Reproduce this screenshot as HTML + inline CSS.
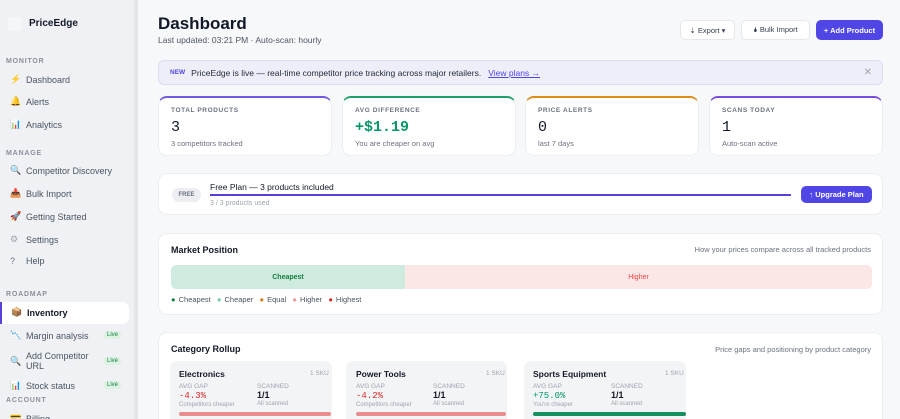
<!DOCTYPE html><html style="width:900px;height:419px;overflow:hidden"><head><style>
*{box-sizing:border-box;margin:0;padding:0}
body{width:900px;height:419px;overflow:hidden;font-family:"Liberation Sans",sans-serif;background:#f7f8fa;position:relative;color:#111827}
.sb{position:absolute;left:0;top:0;width:138px;height:419px;background:#eff1f4;border-right:4px solid #e4e6ea}
.a{position:absolute}
.lab{font-size:7px;font-weight:bold;color:#8a909b;letter-spacing:.8px;left:6px}
.it{left:10px;font-size:9px;color:#4b5563;display:flex;align-items:center}
.it i{font-style:normal;width:16px;font-size:9px;display:inline-block}
.live{position:absolute;left:104px;font-size:6px;color:#15803d;background:#dcf2e3;padding:1px 3px;border-radius:3px}
.card{position:absolute;background:#fff;border-radius:9px;border:1px solid #eceef1}
.sl{font-size:6.5px;color:#6b7280;letter-spacing:.6px;font-weight:bold}
.mono{font-family:"Liberation Mono",monospace}
.btn{position:absolute;top:20px;height:20px;border-radius:5px;font-size:7.5px;display:flex;align-items:center;justify-content:center;white-space:nowrap}
</style></head><body>
<div class="sb">
<div class="a" style="left:8px;top:17px;width:14px;height:14px;border-radius:4px;background:#f5f6f8"></div>
<div class="a" style="left:29px;top:18px;font-size:10px;font-weight:bold;color:#111827">PriceEdge</div>
<div class="a lab" style="top:58px">MONITOR</div>
<div class="a it" style="top:74px"><i style="color:#f59e0b">⚡</i>Dashboard</div>
<div class="a it" style="top:96px"><i style="color:#f5b000">🔔</i>Alerts</div>
<div class="a it" style="top:119px"><i>📊</i>Analytics</div>
<div class="a lab" style="top:150px">MANAGE</div>
<div class="a it" style="top:165px"><i>🔍</i>Competitor Discovery</div>
<div class="a it" style="top:188px"><i>📥</i>Bulk Import</div>
<div class="a it" style="top:211px"><i>🚀</i>Getting Started</div>
<div class="a it" style="top:234px"><i style="color:#9ca3af">⚙</i>Settings</div>
<div class="a it" style="top:256px"><i style="color:#6b7280">?</i>Help</div>
<div class="a lab" style="top:291px">ROADMAP</div>
<div class="a" style="left:0;top:302px;width:129px;height:22px;background:#fff;border-radius:0 7px 7px 0;border-left:2px solid #5b3fd6"></div>
<div class="a it" style="top:307px;left:11px;color:#111827;font-weight:bold"><i>📦</i>Inventory</div>
<div class="a it" style="top:330px"><i>📉</i>Margin analysis</div><span class="live" style="top:331px">Live</span>
<div class="a it" style="top:351px;line-height:10px"><i>🔍</i>Add Competitor<br>URL</div><span class="live" style="top:357px">Live</span>
<div class="a it" style="top:380px"><i>📊</i>Stock status</div><span class="live" style="top:381px">Live</span>
<div class="a lab" style="top:397px">ACCOUNT</div>
<div class="a it" style="top:413px"><i>💳</i>Billing</div>
</div>

<div class="a" style="left:158px;top:14px;font-size:17px;font-weight:bold">Dashboard</div>
<div class="a" style="left:158px;top:35px;font-size:8.5px;color:#4b5563">Last updated: 03:21 PM · Auto-scan: hourly</div>
<div class="btn" style="left:680px;width:55px;background:#fff;border:1px solid #e5e7eb;color:#374151">⇣ Export ▾</div>
<div class="btn" style="left:741px;width:69px;background:#fff;border:1px solid #e5e7eb;color:#374151">🌢 Bulk Import</div>
<div class="btn" style="left:816px;width:67px;background:#4f46e5;color:#fff;font-weight:bold">+ Add Product</div>

<div class="a" style="left:158px;top:60px;width:725px;height:25px;background:#eeeef9;border:1px solid #dcdcf2;border-radius:6px;font-size:8.5px;display:flex;align-items:center;padding-left:11px;color:#1f2937">
<span style="font-size:6.5px;font-weight:bold;color:#4f46e5;margin-right:6px">NEW</span>PriceEdge is live — real-time competitor price tracking across major retailers.<span style="color:#4f46e5;text-decoration:underline;margin-left:7px">View plans →</span>
<span style="position:absolute;right:10px;color:#9ca3af;font-size:10px">✕</span></div>

<div class="card" style="left:158px;top:96px;width:174px;height:60px;border-top:2px solid #6d5ce0"><div class="a sl" style="left:12px;top:9px">TOTAL PRODUCTS</div><div class="a mono" style="left:12px;top:21px;font-size:15px">3</div><div class="a" style="left:12px;top:41px;font-size:7.5px;color:#6b7280">3 competitors tracked</div></div>
<div class="card" style="left:342px;top:96px;width:174px;height:60px;border-top:2px solid #22a06b"><div class="a sl" style="left:12px;top:9px">AVG DIFFERENCE</div><div class="a mono" style="left:12px;top:21px;font-size:15px;color:#059669;font-weight:bold">+$1.19</div><div class="a" style="left:12px;top:41px;font-size:7.5px;color:#6b7280">You are cheaper on avg</div></div>
<div class="card" style="left:525px;top:96px;width:174px;height:60px;border-top:2px solid #e08a1e"><div class="a sl" style="left:12px;top:9px">PRICE ALERTS</div><div class="a mono" style="left:12px;top:21px;font-size:15px">0</div><div class="a" style="left:12px;top:41px;font-size:7.5px;color:#6b7280">last 7 days</div></div>
<div class="card" style="left:709px;top:96px;width:174px;height:60px;border-top:2px solid #7c4fe0"><div class="a sl" style="left:12px;top:9px">SCANS TODAY</div><div class="a mono" style="left:12px;top:21px;font-size:15px">1</div><div class="a" style="left:12px;top:41px;font-size:7.5px;color:#6b7280">Auto-scan active</div></div>

<div class="card" style="left:158px;top:173px;width:725px;height:42px">
<div class="a" style="left:13px;top:14px;width:29px;height:14px;border-radius:7px;background:#eceef1;font-size:6px;font-weight:bold;color:#6b7280;display:flex;align-items:center;justify-content:center">FREE</div>
<div class="a" style="left:51px;top:8px;font-size:8.5px;color:#111827">Free Plan — 3 products included</div>
<div class="a" style="left:51px;top:20px;width:581px;height:2px;background:#5b3fd6"></div>
<div class="a" style="left:51px;top:26px;font-size:7px;color:#9ca3af">3 / 3 products used</div>
<div class="a" style="left:642px;top:12px;width:71px;height:17px;border-radius:5px;background:#4f46e5;color:#fff;font-size:7.5px;font-weight:bold;display:flex;align-items:center;justify-content:center">↑ Upgrade Plan</div></div>

<div class="card" style="left:158px;top:233px;width:725px;height:82px">
<div class="a" style="left:12px;top:11px;font-size:9px;font-weight:bold">Market Position</div>
<div class="a" style="right:11px;top:11px;font-size:7.5px;color:#6b7280">How your prices compare across all tracked products</div>
<div class="a" style="left:12px;top:31px;width:234px;height:24px;background:#cfeadf;border-radius:5px 0 0 5px;font-size:7px;font-weight:bold;color:#15803d;display:flex;align-items:center;justify-content:center">Cheapest</div>
<div class="a" style="left:246px;top:31px;width:467px;height:24px;background:#fce7e7;border-radius:0 5px 5px 0;font-size:7px;color:#ef4444;display:flex;align-items:center;justify-content:center">Higher</div>
<div class="a" style="left:12px;top:61px;font-size:7.5px;color:#4b5563;word-spacing:1px"><span style="color:#15803d">●</span> Cheapest &nbsp;<span style="color:#6ecaa6">●</span> Cheaper &nbsp;<span style="color:#d97706">●</span> Equal &nbsp;<span style="color:#f09595">●</span> Higher &nbsp;<span style="color:#dc2626">●</span> Highest</div></div>

<div class="card" style="left:158px;top:332px;width:725px;height:100px">
<div class="a" style="left:12px;top:11px;font-size:9px;font-weight:bold">Category Rollup</div>
<div class="a" style="right:11px;top:12px;font-size:7.5px;color:#6b7280">Price gaps and positioning by product category</div>
</div>
<div class="a" style="left:170px;top:361px;width:162px;height:70px;background:#f3f4f6;border-radius:7px"></div>
<div class="a" style="left:346px;top:361px;width:161px;height:70px;background:#f3f4f6;border-radius:7px"></div>
<div class="a" style="left:524px;top:361px;width:162px;height:70px;background:#f3f4f6;border-radius:7px"></div>

<div class="a" style="left:179px;top:369px;font-size:8.5px;font-weight:bold">Electronics</div><div class="a" style="left:310px;top:370px;font-size:6.5px;color:#9ca3af">1 SKU</div>
<div class="a" style="left:179px;top:383px;font-size:6.5px;color:#9ca3af">AVG GAP</div><div class="a" style="left:257px;top:383px;font-size:6.5px;color:#9ca3af">SCANNED</div>
<div class="a mono" style="left:179px;top:391px;font-size:9px;color:#dc2626">-4.3%</div><div class="a" style="left:257px;top:390px;font-size:9px;font-weight:bold">1/1</div>
<div class="a" style="left:179px;top:402px;font-size:6px;color:#9ca3af">Competitors cheaper</div><div class="a" style="left:257px;top:401px;font-size:6px;color:#9ca3af">All scanned</div>
<div class="a" style="left:179px;top:412px;width:152px;height:4px;border-radius:2px;background:#e88e8e"></div>

<div class="a" style="left:356px;top:369px;font-size:8.5px;font-weight:bold">Power Tools</div><div class="a" style="left:486px;top:370px;font-size:6.5px;color:#9ca3af">1 SKU</div>
<div class="a" style="left:356px;top:383px;font-size:6.5px;color:#9ca3af">AVG GAP</div><div class="a" style="left:433px;top:383px;font-size:6.5px;color:#9ca3af">SCANNED</div>
<div class="a mono" style="left:356px;top:391px;font-size:9px;color:#dc2626">-4.2%</div><div class="a" style="left:433px;top:390px;font-size:9px;font-weight:bold">1/1</div>
<div class="a" style="left:356px;top:402px;font-size:6px;color:#9ca3af">Competitors cheaper</div><div class="a" style="left:433px;top:401px;font-size:6px;color:#9ca3af">All scanned</div>
<div class="a" style="left:356px;top:412px;width:150px;height:4px;border-radius:2px;background:#e88e8e"></div>

<div class="a" style="left:533px;top:369px;font-size:8.5px;font-weight:bold">Sports Equipment</div><div class="a" style="left:665px;top:370px;font-size:6.5px;color:#9ca3af">1 SKU</div>
<div class="a" style="left:533px;top:383px;font-size:6.5px;color:#9ca3af">AVG GAP</div><div class="a" style="left:611px;top:383px;font-size:6.5px;color:#9ca3af">SCANNED</div>
<div class="a mono" style="left:533px;top:391px;font-size:9px;color:#059669">+75.0%</div><div class="a" style="left:611px;top:390px;font-size:9px;font-weight:bold">1/1</div>
<div class="a" style="left:533px;top:402px;font-size:6px;color:#9ca3af">You're cheaper</div><div class="a" style="left:611px;top:401px;font-size:6px;color:#9ca3af">All scanned</div>
<div class="a" style="left:533px;top:412px;width:153px;height:4px;border-radius:2px;background:#15905f"></div>
</body></html>
